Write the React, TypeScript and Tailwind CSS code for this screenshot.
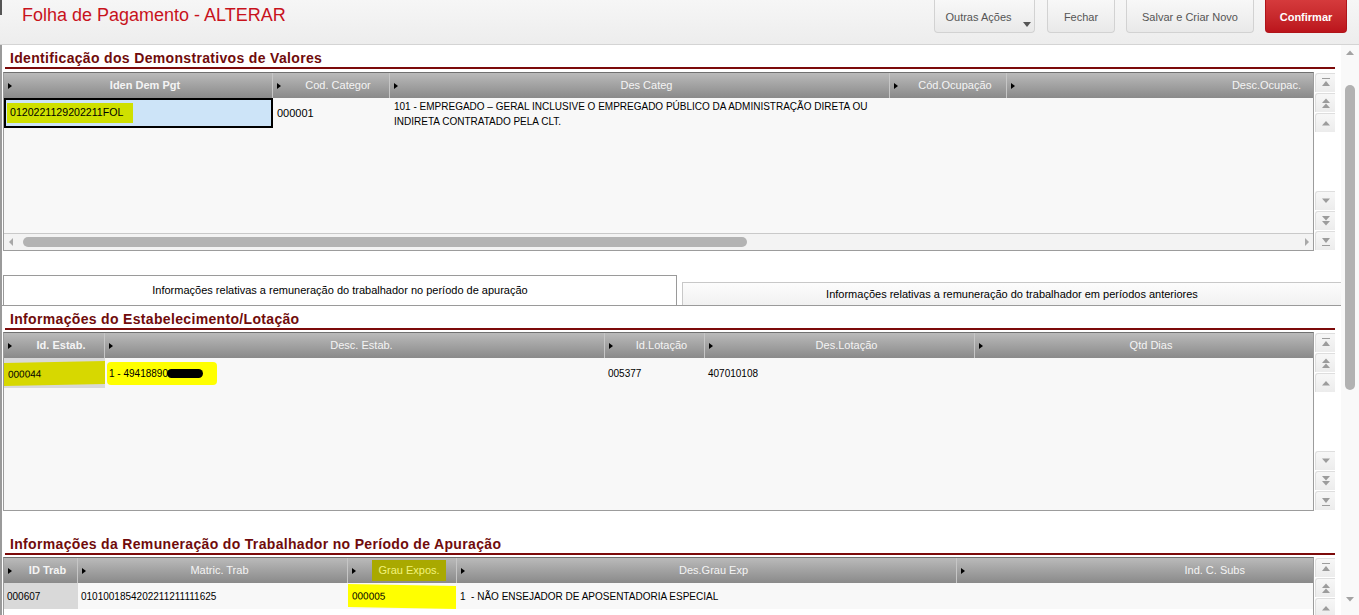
import clsx from 'clsx';

type Col = {
  label: string;
  w: string;
  align?: string;
  bold?: boolean;
  mark?: boolean;
};

const demCols: Col[] = [
  { label: 'Iden Dem Pgt', w: 'w-[269px]', bold: true },
  { label: 'Cod. Categor', w: 'w-[117px]' },
  { label: 'Des Categ', w: 'w-[500px]' },
  { label: 'Cód.Ocupação', w: 'w-[117px]' },
  { label: 'Desc.Ocupac.', w: 'w-[306px]', align: 'justify-end pr-[12px]' },
];

const estabCols: Col[] = [
  { label: 'Id. Estab.', w: 'w-[101px]', bold: true },
  { label: 'Desc. Estab.', w: 'w-[500px]' },
  { label: 'Id.Lotação', w: 'w-[100px]' },
  { label: 'Des.Lotação', w: 'w-[270px]' },
  { label: 'Qtd Dias', w: 'w-[338px]' },
];

const trabCols: Col[] = [
  { label: 'ID Trab', w: 'w-[74px]', bold: true },
  { label: 'Matric. Trab', w: 'w-[270px]' },
  { label: 'Grau Expos.', w: 'w-[109px]', mark: true },
  { label: 'Des.Grau Exp', w: 'w-[500px]' },
  { label: 'Ind. C. Subs', w: 'w-[356px]', align: 'justify-end pr-[68px]' },
];

function HeadCell({ col }: { col: Col }) {
  return (
    <div className={clsx('flex h-full shrink-0 items-center border-r border-[#c6c6c6] last:border-r-0', col.w)}>
      <span className="ml-[4px] h-0 w-0 shrink-0 border-y-[3.5px] border-l-[4px] border-y-transparent border-l-black" />
      <div className={clsx('flex flex-1', col.align ?? 'justify-center pl-[6px]')}>
        {col.mark ? (
          <span className="bg-[#a9a900] px-[6px] py-[2px] text-[#f3f37c]">{col.label}</span>
        ) : (
          <span className={clsx('text-[#f4f4f4]', col.bold && 'font-bold')}>{col.label}</span>
        )}
      </div>
    </div>
  );
}

function GridHeader({ cols }: { cols: Col[] }) {
  return (
    <div className="flex h-[25px] bg-gradient-to-b from-[#bababa] to-[#8a8a8a] text-[11px]">
      {cols.map((c) => (
        <HeadCell key={c.label} col={c} />
      ))}
    </div>
  );
}

function Arrow({ dir, kind }: { dir: 'up' | 'down'; kind: 'end' | 'page' | 'step' }) {
  const up = dir === 'up';
  return (
    <svg width="10" height="12" viewBox="0 0 10 12" className="fill-[#9c9c9c]">
      <g transform={up ? undefined : 'rotate(180 5 6)'}>
        {kind === 'end' && (
          <>
            <rect x="1" y="1" width="8" height="1" />
            <path d="M1 9 L5 4 L9 9 Z" />
          </>
        )}
        {kind === 'page' && (
          <>
            <path d="M1 6 L5 1.5 L9 6 Z" />
            <path d="M1 11 L5 6.5 L9 11 Z" />
          </>
        )}
        {kind === 'step' && <path d="M1 8.5 L5 4 L9 8.5 Z" />}
      </g>
    </svg>
  );
}

function NavBtn({ dir, kind }: { dir: 'up' | 'down'; kind: 'end' | 'page' | 'step' }) {
  return (
    <div className="flex h-[19px] items-center justify-center rounded-tl-[3px] border-l border-t border-[#dedede] bg-gradient-to-b from-[#f7f7f7] to-[#ececec]">
      <Arrow dir={dir} kind={kind} />
    </div>
  );
}

function SideNav({ h }: { h: string }) {
  return (
    <div className={clsx('ml-[1px] flex w-[20px] flex-col justify-between py-[1px]', h)}>
      <div className="flex flex-col gap-[1px]">
        <NavBtn dir="up" kind="end" />
        <NavBtn dir="up" kind="page" />
        <NavBtn dir="up" kind="step" />
      </div>
      <div className="flex flex-col gap-[1px]">
        <NavBtn dir="down" kind="step" />
        <NavBtn dir="down" kind="page" />
        <NavBtn dir="down" kind="end" />
      </div>
    </div>
  );
}

function SectionTitle({ children }: { children: string }) {
  return (
    <div className="ml-[3px] w-[1330px] border-b-2 border-[#7c0a0a] pb-[1px] pl-[5px] pt-[5px] text-[14px] font-bold leading-[16px] tracking-[0.33px] text-[#700b0b]">
      {children}
    </div>
  );
}

function ToolButton({ children, red, w }: { children: React.ReactNode; red?: boolean; w: string }) {
  return (
    <button
      className={clsx(
        'relative h-[33px] rounded-b-[4px] border border-t-0 pt-[3px] text-[11px]',
        w,
        red
          ? 'border-[#b0141a] bg-gradient-to-b from-[#d53a3c] to-[#bb141c] font-bold text-white'
          : 'border-[#d2d2d2] bg-gradient-to-b from-[#f8f8f8] to-[#e9e9e9] text-[#555]'
      )}
    >
      {children}
    </button>
  );
}

export default function App() {
  return (
    <div className="flex h-[615px] w-[1359px] flex-col overflow-hidden bg-white font-['Liberation_Sans',Arial,sans-serif] text-black">
      {/* barra de título e ações */}
      <header className="flex h-[45px] shrink-0 justify-between border-b border-[#d4d4d4] bg-gradient-to-b from-[#f6f6f6] to-[#ededed]">
        <div className="flex items-start">
          <div className="h-[15px] w-[2px] bg-[#555]" />
          <h1 className="ml-[20px] pt-[4px] text-[18px] leading-[22px] text-[#c8121c]">Folha de Pagamento - ALTERAR</h1>
        </div>
        <div className="mr-[12px] flex items-start gap-[11px]">
          <ToolButton w="w-[101px] mr-[1px]">
            <span className="pr-[12px]">Outras Ações</span>
            <span className="absolute bottom-[5px] right-[3px] h-0 w-0 border-x-[4.5px] border-t-[5px] border-x-transparent border-t-[#555]" />
          </ToolButton>
          <ToolButton w="w-[68px]">Fechar</ToolButton>
          <ToolButton w="w-[128px]">Salvar e Criar Novo</ToolButton>
          <ToolButton w="w-[82px]" red>
            Confirmar
          </ToolButton>
        </div>
      </header>

      <div className="flex min-h-0 flex-1">
        <main className="w-[1341px] shrink-0 border-l-2 border-[#9a9a9a]">
          <SectionTitle>Identificação dos Demonstrativos de Valores</SectionTitle>

          {/* grade: demonstrativos */}
          <div className="mt-[3px] flex">
            <div className="ml-[1px] w-[1311px] border border-[#9c9c9c] border-t-[#707070]">
              <GridHeader cols={demCols} />
              <div className="h-[135px] bg-[#f8f8f8] text-[10px]">
                <div className="flex h-[30px]">
                  <div className="flex w-[269px] items-center border-2 border-black bg-[#cde4f8] pl-[1px]">
                    <span className="bg-[#cfe000] py-[2px] pl-[3px] pr-[10px] text-[10.6px]">0120221129202211FOL</span>
                  </div>
                  <div className="flex w-[117px] items-center px-[4px] text-[11px]">000001</div>
                  <div className="w-[500px] px-[4px] pt-[1px] leading-[15px]">
                    101 - EMPREGADO – GERAL INCLUSIVE O EMPREGADO PÚBLICO DA ADMINISTRAÇÃO DIRETA OU INDIRETA CONTRATADO PELA CLT.
                  </div>
                </div>
              </div>
              <div className="flex h-[17px] items-center border-t border-[#c9c9c9] bg-[#f3f3f3]">
                <span className="ml-[5px] h-0 w-0 border-y-[4px] border-r-[4px] border-y-transparent border-r-[#a8a8a8]" />
                <div className="ml-[10px] h-[10px] w-[724px] rounded-[5px] bg-[#b3b3b3]" />
                <span className="ml-auto mr-[4px] h-0 w-0 border-y-[4px] border-l-[4px] border-y-transparent border-l-[#a8a8a8]" />
              </div>
            </div>
            <SideNav h="h-[179px]" />
          </div>

          {/* abas */}
          <div className="mt-[24px] flex h-[31px] items-end border-b border-[#9a9a9a] text-[11px]">
            <div className="ml-[1px] flex h-[30px] w-[674px] items-center justify-center border-x border-t border-[#9a9a9a] bg-white">
              Informações relativas a remuneração do trabalhador no período de apuração
            </div>
            <div className="ml-[5px] flex h-[23px] flex-1 items-center justify-center border-l border-t border-[#c8c8c8] bg-gradient-to-b from-[#fcfcfc] to-[#f1f1f1] pt-[1px]">
              Informações relativas a remuneração do trabalhador em períodos anteriores
            </div>
          </div>

          <SectionTitle>Informações do Estabelecimento/Lotação</SectionTitle>

          {/* grade: estabelecimento */}
          <div className="mt-[2px] flex">
            <div className="ml-[1px] w-[1311px] border border-[#9c9c9c] border-t-[#707070]">
              <GridHeader cols={estabCols} />
              <div className="h-[152px] bg-[#f8f8f8] text-[10px]">
                <div className="flex h-[30px] items-center">
                  <div className="flex h-full w-[101px] items-center bg-[#d9d9d9]">
                    <span className="w-full -skew-y-1 bg-[#d7d800] py-[4px] pl-[4px]">000044</span>
                  </div>
                  <div className="flex w-[500px] items-center pl-[2px]">
                    <span className="flex items-center rounded-sm bg-[#ffff00] py-[4px] pl-[2px] pr-[14px]">
                      1 - 49418890
                      <span className="-ml-[1px] h-[9px] w-[36px] rounded-full bg-black" />
                    </span>
                  </div>
                  <div className="w-[100px] px-[3px]">005377</div>
                  <div className="w-[270px] px-[3px]">407010108</div>
                </div>
              </div>
            </div>
            <SideNav h="h-[179px]" />
          </div>

          <div className="mt-[20px]">
            <SectionTitle>Informações da Remuneração do Trabalhador no Período de Apuração</SectionTitle>
          </div>

          {/* grade: remuneração */}
          <div className="mt-[2px] flex">
            <div className="ml-[1px] w-[1311px] border border-[#9c9c9c] border-t-[#707070]">
              <GridHeader cols={trabCols} />
              <div className="h-[26px] bg-[#f8f8f8] text-[10px]">
                <div className="flex h-[26px] items-center">
                  <div className="flex h-full w-[74px] items-center bg-[#d9d9d9] px-[3px]">000607</div>
                  <div className="w-[270px] px-[3px]">0101001854202211211111625</div>
                  <div className="flex w-[109px] items-center">
                    <span className="w-[108px] skew-y-1 bg-[#ffff00] py-[4px] pl-[4px]">000005</span>
                  </div>
                  <div className="w-[500px] px-[3px]">1&nbsp; - NÃO ENSEJADOR DE APOSENTADORIA ESPECIAL</div>
                </div>
              </div>
            </div>
            <SideNav h="h-[60px]" />
          </div>
        </main>

        {/* barra de rolagem da página */}
        <div className="flex w-[18px] flex-col items-center bg-[#f9f9f9]">
          <svg width="8" height="6" viewBox="0 0 8 6" className="mt-[5px] fill-[#a3a3a3]">
            <path d="M0 5 L4 0.5 L8 5 Z" />
          </svg>
          <div className="mt-[29px] h-[305px] w-[10px] rounded-[5px] bg-[#b2b2b2]" />
          <svg width="8" height="6" viewBox="0 0 8 6" className="mt-auto mb-[13px] fill-[#a3a3a3]">
            <path d="M0 1 L4 5.5 L8 1 Z" />
          </svg>
        </div>
      </div>
    </div>
  );
}
